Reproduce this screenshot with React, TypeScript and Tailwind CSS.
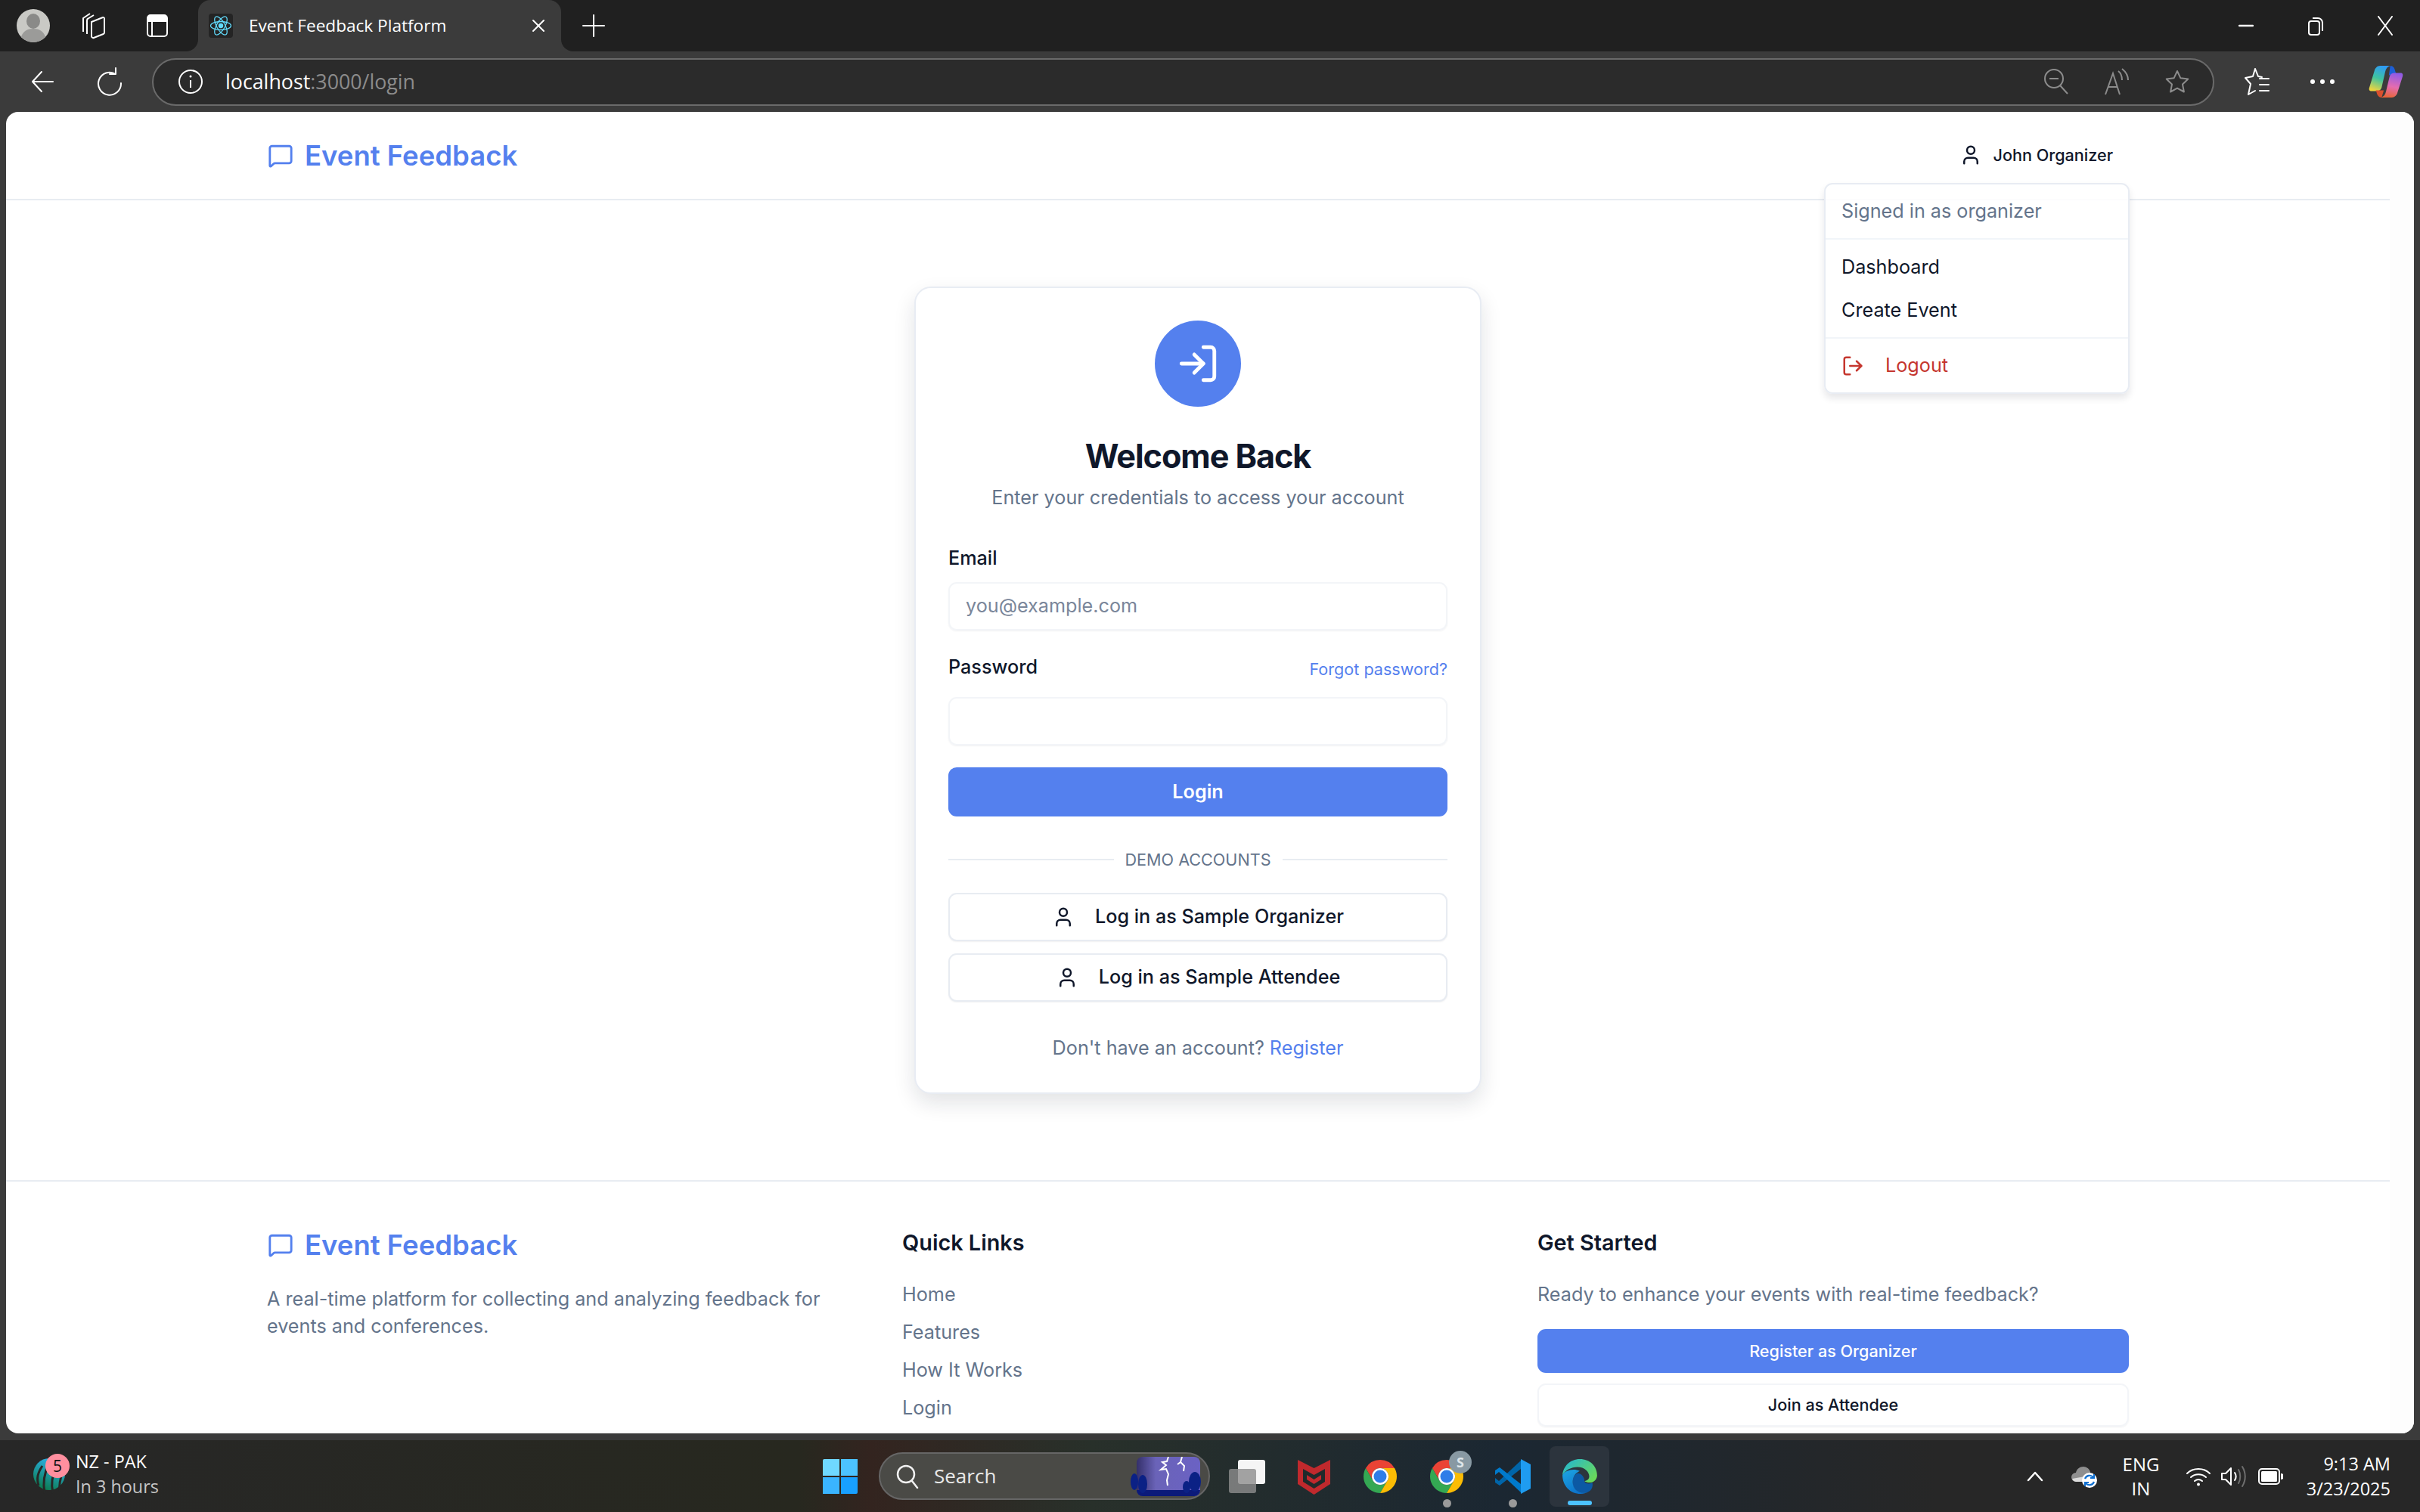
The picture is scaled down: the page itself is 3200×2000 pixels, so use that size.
import React from 'react'
import { LogIn, LogOut, MessageSquare, User } from 'lucide-react'

const Logo = () => (
  <div className="flex items-center gap-[15px] h-[48px] text-[#5480ee]">
    <MessageSquare size={34} strokeWidth={2} className="ml-[1px]" />
    <span className="text-[36.500px] font-semibold leading-[48px]">Event Feedback</span>
  </div>
)

const Avatar = () => (
  <svg width="44" height="44" viewBox="0 0 44 44">
    <circle cx="22" cy="22" r="22" fill="#c9c9c5" />
    <ellipse cx="22" cy="16" rx="9" ry="10" fill="#8a8a88" />
    <path d="M6 37c2-8 9-11 16-11s14 3 16 11a22 22 0 0 1-32 0z" fill="#9b9b99" />
  </svg>
)

const Collections = () => (
  <svg width="34" height="36" viewBox="0 0 34 36" fill="none" stroke="#fff" strokeWidth="2" strokeLinejoin="round">
    <path d="M3 26V8l9-6" />
    <path d="M8 29V11c0-1 .5-2 1.500-2.500L17 4" />
    <path d="M14 13l15-6c1-.4 2 .4 2 1.500V27c0 1-.5 1.600-1.400 2L17 34c-1 .4-3-.4-3-2z" />
  </svg>
)

const SidebarIcon = () => (
  <svg width="28" height="30" viewBox="0 0 28 30" fill="none">
    <rect x="1" y="1" width="26" height="28" rx="4" stroke="#fff" strokeWidth="2" />
    <path d="M1 10V5a4 4 0 0 1 4-4h18a4 4 0 0 1 4 4v5z" fill="#fff" />
    <path d="M7 10v19" stroke="#fff" strokeWidth="2" />
  </svg>
)

const ReactFavicon = () => (
  <div className="w-[32px] h-[32px] rounded-[4px] bg-[#242424] flex items-center justify-center">
    <svg width="30" height="30" viewBox="0 0 30 30" fill="none" stroke="#61dafb" strokeWidth="1.300">
      <ellipse cx="15" cy="15" rx="13.500" ry="5.500" />
      <ellipse cx="15" cy="15" rx="13.500" ry="5.500" transform="rotate(60 15 15)" />
      <ellipse cx="15" cy="15" rx="13.500" ry="5.500" transform="rotate(120 15 15)" />
      <circle cx="15" cy="15" r="2.600" fill="#61dafb" />
    </svg>
  </div>
)

const Thin = ({ d, w = 32, h = 32, color = '#fff', sw = 2 }: { d: string; w?: number; h?: number; color?: string; sw?: number }) => (
  <svg width={w} height={h} viewBox={`0 0 ${w} ${h}`} fill="none" stroke={color} strokeWidth={sw} strokeLinecap="round" strokeLinejoin="round">
    <path d={d} />
  </svg>
)

const Copilot = () => (
  <svg width="46" height="42" viewBox="0 0 48 44">
    <defs>
      <linearGradient id="cpA" x1="0.6" y1="0" x2="0.3" y2="1">
        <stop offset="0" stopColor="#2f9bf4" />
        <stop offset="0.5" stopColor="#3fc4a0" />
        <stop offset="1" stopColor="#efd43f" />
      </linearGradient>
      <linearGradient id="cpB" x1="0.6" y1="0" x2="0.4" y2="1">
        <stop offset="0" stopColor="#8f5be6" />
        <stop offset="0.55" stopColor="#e46cb0" />
        <stop offset="1" stopColor="#e8663a" />
      </linearGradient>
    </defs>
    <path d="M30 0c4 0 6 3 7 8l2 5H28z" fill="#1d5fd6" />
    <path d="M16 0h14c-4 1-6 4-7 8l-5 22c-1 3-3 5-7 5H4c-3 0-4-2-3-5L8 7c1-4 4-7 8-7z" fill="url(#cpA)" />
    <path d="M18 44c-4 0-6-3-7-7l-1-3h11z" fill="#d9502e" />
    <path d="M32 44H17c4-1 6-4 7-8l5-21c1-3 3-5 7-5h8c3 0 4 2 3 5l-7 22c-1 4-4 7-8 7z" fill="url(#cpB)" />
  </svg>
)

const WindowsLogo = () => (
  <div className="grid grid-cols-2 gap-[2px] w-[46px] h-[46px]">
    <div className="bg-[#6fd8ff] rounded-tl-[2px]" />
    <div className="bg-[#4cc3ff]" />
    <div className="bg-[#3ab4ff]" />
    <div className="bg-[#18a0ff] rounded-br-[2px]" />
  </div>
)

const StormThumb = () => (
  <svg width="98" height="52" viewBox="0 0 98 52" className="rounded-[10px]">
    <defs>
      <linearGradient id="sky" x1="0" y1="0" x2="1" y2="0">
        <stop offset="0" stopColor="#34306a" />
        <stop offset="0.3" stopColor="#6a63b8" />
        <stop offset="1" stopColor="#6b62c4" />
      </linearGradient>
    </defs>
    <rect x="8" width="84" height="52" rx="8" fill="url(#sky)" />
    <path d="M50 0l-2 6-6 1 5 4-7 6 7-1 3 7-2 8 1 7" fill="none" stroke="#fff" strokeWidth="2" />
    <path d="M68 0l-2 7 5 5-1 7M66 7l-4 3" fill="none" stroke="#fff" strokeWidth="2" />
    <path d="M8 44h84v0a8 8 0 0 1-8 8H16a8 8 0 0 1-8-8z" fill="#0b1a7a" />
    <ellipse cx="5" cy="33" rx="5" ry="11" fill="#0b2185" />
    <ellipse cx="16" cy="36" rx="6" ry="12" fill="#0b2185" />
    <ellipse cx="74" cy="40" rx="5" ry="8" fill="#0b2185" />
    <ellipse cx="85" cy="33" rx="8" ry="13" fill="#0b2185" />
  </svg>
)

const TaskView = () => (
  <div className="relative w-[48px] h-[44px]">
    <div className="absolute left-[12px] top-0 w-[36px] h-[32px] rounded-[3px] bg-[#f5f5f5]" />
    <div className="absolute left-0 top-[12px] w-[36px] h-[32px] rounded-[3px] bg-[#8d8d8d]/80" />
  </div>
)

const McAfee = () => (
  <svg width="43" height="48" viewBox="0 0 43 48">
    <path d="M0 2l21.500 11L43 2v32L21.500 48 0 34z" fill="#c0292d" />
    <path d="M7 14l14.500 8L36 14v17l-14.500 9L7 31z" fill="#1f2a2b" />
    <path d="M12 22l9.500 6 9.500-6v6l-9.500 6-9.500-6z" fill="#c0292d" />
  </svg>
)

const Chrome = () => (
  <svg width="48" height="48" viewBox="0 0 48 48">
    <path d="M24 2A22 22 0 0 1 43.050 13H24a11 11 0 0 0-9.530 16.500L4.950 13A22 22 0 0 1 24 2z" fill="#ea4335" />
    <path d="M4.950 13l9.520 16.500a11 11 0 0 0 19.060 0L24 46A22 22 0 0 1 4.950 13z" fill="#34a853" />
    <path d="M43.050 13H24a11 11 0 0 1 9.530 16.500L24 46a22 22 0 0 0 19.050-33z" fill="#fbbc04" />
    <circle cx="24" cy="24" r="11" fill="#fff" />
    <circle cx="24" cy="24" r="8.500" fill="#2f7de8" />
  </svg>
)

const VSCode = () => (
  <svg width="49" height="48" viewBox="0 0 49 48">
    <path d="M35 3L6 30l-5-4v6l6 4 28-22z" fill="#0065a9" />
    <path d="M35 45L6 18l-5 4v-6l6-4 28 22z" fill="#007acc" />
    <path d="M35 1l13 7v32l-13 7z" fill="#1f9cf0" />
  </svg>
)

const Edge = () => (
  <svg width="50" height="52" viewBox="0 0 48 48">
    <defs>
      <linearGradient id="edA" x1="0" y1="0" x2="1" y2="0.7">
        <stop offset="0" stopColor="#1fb4d8" />
        <stop offset="1" stopColor="#6ad95a" />
      </linearGradient>
      <linearGradient id="edB" x1="0" y1="0" x2="0.6" y2="1">
        <stop offset="0" stopColor="#1da7e4" />
        <stop offset="1" stopColor="#0c71c9" />
      </linearGradient>
    </defs>
    <path d="M34 44c-8 3-20 1-19-13 0-5 2-9 6-11 6 0 9 6 9 10 0 3 6 4 10 2 1 5-1 10-6 12z" fill="#0c59a4" />
    <path d="M2 22c0 14 10 24 23 24 4 0 7-1 9-2-9 3-19-2-19-13 0-7 4-12 9-14C15 13 5 17 2 22z" fill="url(#edB)" />
    <path d="M24 2C12 2 3 11 2 22c4-6 11-10 19-10 9 0 15 6 15 12 0 3-2 5-6 6 4 3 15 3 16-7C46 11 37 2 24 2z" fill="url(#edA)" />
  </svg>
)

const IccLogo = () => (
  <svg width="46" height="48" viewBox="0 0 46 48">
    <defs>
      <linearGradient id="icc" x1="0.7" y1="0" x2="0.3" y2="1">
        <stop offset="0" stopColor="#2db4f0" />
        <stop offset="1" stopColor="#0b7a4c" />
      </linearGradient>
    </defs>
    <circle cx="23" cy="21" r="21" fill="url(#icc)" />
    <path d="M14 10c-6 9-8 16-5 26M23 6c-6 12-9 24-6 40M33 10c-6 12-8 24-5 36M41 18c-4 10-5 18-4 26" fill="none" stroke="#272827" strokeWidth="3" />
  </svg>
)

const Wifi = () => (
  <svg width="34" height="28" viewBox="0 0 34 28" fill="none" stroke="#fff" strokeWidth="2" strokeLinecap="round">
    <path d="M2 10c8-8 22-8 30 0" />
    <path d="M7 15c5.500-5 14.500-5 20 0" />
    <path d="M12 20c3-2.500 7-2.500 10 0" />
    <circle cx="17" cy="24.500" r="2" fill="#fff" stroke="none" />
  </svg>
)

const Speaker = () => (
  <svg width="34" height="30" viewBox="0 0 34 30" fill="none" strokeWidth="2" strokeLinejoin="round" strokeLinecap="round">
    <path d="M2 11v8h5l7 7V4L7 11z" stroke="#fff" />
    <path d="M19 10c2 3 2 7 0 10" stroke="#fff" />
    <path d="M24 6c3 5 3 13 0 18" stroke="#6e6e6e" />
    <path d="M29 2c5 8 5 18 0 26" stroke="#6e6e6e" />
  </svg>
)

const Battery = () => (
  <svg width="33" height="22" viewBox="0 0 33 22" fill="none">
    <rect x="1" y="1" width="27" height="20" rx="4" stroke="#fff" strokeWidth="2" />
    <rect x="4" y="4" width="21" height="14" rx="1.500" fill="#fff" />
    <path d="M30 7a4 4 0 0 1 0 8z" fill="#fff" />
  </svg>
)

const CloudSync = () => (
  <svg width="34" height="30" viewBox="0 0 34 30">
    <path d="M6 22a6 6 0 0 1 0-12c1-5 5-8 10-8 4 0 8 3 9 7l1 13z" fill="#8f8f8f" />
    <path d="M1 18a6 6 0 0 0 5 4h12v-7z" fill="#dcdcdc" />
    <circle cx="24" cy="20" r="10" fill="#fff" />
    <path d="M18 18a6.500 6.500 0 0 1 11-2M30 22a6.500 6.500 0 0 1-11 2" fill="none" stroke="#0f6fd0" strokeWidth="2.200" />
    <path d="M30 12v5h-5M18 28v-5h5" fill="none" stroke="#0f6fd0" strokeWidth="2" />
  </svg>
)

const DemoButton = ({ label }: { label: string }) => (
  <button className="w-full flex items-center justify-center gap-[27px] border-2 border-[#e8ecf2] rounded-[11px] bg-white text-[#0f172a] text-[25.2px] font-[450] shadow-[0_1px_2px_rgba(15,23,42,0.06)] h-[64px]">
    <User size={30} strokeWidth={2} />
    {label}
  </button>
)

const BrowserTabs = () => (
  <div className="h-[68px] bg-[#202020] flex items-center shrink-0">
    <div className="ml-[22px]"><Avatar /></div>
    <div className="ml-[41px]"><Collections /></div>
    <div className="ml-[53px]"><SidebarIcon /></div>
    <div className="relative ml-[40px] w-[480px] h-[68px] bg-[#3b3b3b] rounded-t-[16px] flex items-center pl-[14px]">
      <span className="absolute bottom-0 -left-[16px] w-[16px] h-[16px] bg-[#3b3b3b]">
        <span className="block w-full h-full bg-[#202020] rounded-br-[16px]" />
      </span>
      <span className="absolute bottom-0 -right-[16px] w-[16px] h-[16px] bg-[#3b3b3b]">
        <span className="block w-full h-full bg-[#202020] rounded-bl-[16px]" />
      </span>
      <ReactFavicon />
      <span className="ml-[21px] text-[22.6px] text-white">Event Feedback Platform</span>
      <div className="ml-auto mr-[21px]"><Thin w={18} h={18} d="M2 2l14 14M16 2L2 16" /></div>
    </div>
    <div className="ml-[27px]"><Thin d="M16 2v28M2 16h28" /></div>
    <div className="ml-auto flex items-center gap-[72px] mr-[36px]">
      <Thin w={20} h={4} d="M1 2h18" sw={2.500} />
      <svg width="20" height="26" viewBox="0 0 20 26" fill="none" stroke="#fff" strokeWidth="2">
        <rect x="1" y="7" width="14" height="18" rx="3" />
        <path d="M6 3h7a6 6 0 0 1 6 6v11" />
      </svg>
      <Thin w={20} h={26} d="M1 1l18 24M19 1L1 25" />
    </div>
  </div>
)

const BrowserToolbar = () => (
  <div className="h-[80px] bg-[#3b3b3b] flex items-center shrink-0">
    <div className="ml-[40px]"><Thin d="M30 16H3M15 3L3 16l12 13" /></div>
    <div className="ml-[56px]">
      <Thin w={34} h={38} d="M25 9a15 15 0 1 0 7 12M25 1v8h-8" />
    </div>
    <div className="ml-[39px] w-[2727px] h-[63px] rounded-full bg-[#2b2b2b] border-2 border-[#6a6a6a] flex items-center pl-[33px] pr-[31px]">
      <svg width="32" height="32" viewBox="0 0 32 32" fill="none" stroke="#fff" strokeWidth="2">
        <circle cx="16" cy="16" r="15" />
        <path d="M16 14v10" />
        <circle cx="16" cy="9" r="1.500" fill="#fff" stroke="none" />
      </svg>
      <span className="ml-[30px] text-[26.8px] text-white">localhost<span className="text-[#8c8c8c]">:3000/login</span></span>
      <div className="ml-auto flex items-center gap-[48px]">
        <svg width="32" height="34" viewBox="0 0 32 34" fill="none" stroke="#8c8c8c" strokeWidth="2">
          <circle cx="13" cy="13" r="12" />
          <path d="M7 13h12M21 22l10 11" />
        </svg>
        <svg width="32" height="36" viewBox="0 0 32 36" fill="none" stroke="#8c8c8c" strokeWidth="2">
          <path d="M1 35L11 7l9 28M5 25h12" />
          <path d="M18 4c4 3 5 7 5 12M23 1c5 4 8 9 8 15" />
        </svg>
        <Thin w={32} h={32} color="#8c8c8c" d="M16 2l4.300 9.200 10 1.300-7.300 7 1.900 10L16 24.600 7.100 29.500l1.900-10-7.300-7 10-1.300z" />
      </div>
    </div>
    <div className="ml-[39px]">
      <Thin w={34} h={40} d="M15 3l4 10 5 1M12 13l3-10M12 13L2 15l7 8-3 14 9-5M21 16h12M21 24h12M21 32h12" />
    </div>
    <div className="ml-[54px] flex gap-[7px]">
      <span className="w-[6px] h-[6px] rounded-full bg-white" />
      <span className="w-[6px] h-[6px] rounded-full bg-white" />
      <span className="w-[6px] h-[6px] rounded-full bg-white" />
    </div>
    <div className="ml-[45px]"><Copilot /></div>
  </div>
)

const UserMenu = () => (
  <div className="absolute -right-[1px] top-[94px] w-[404px] h-[279px] rounded-[11px] border-2 border-[#e8ecf3] bg-white/85 shadow-[0_6px_10px_rgba(15,23,42,0.1)] text-[25.2px] flex flex-col">
    <div className="h-[73px] border-b-2 border-[#f1f5f9] pl-[21px] pt-[18px] leading-[34px] text-[#64748b]">Signed in as organizer</div>
    <div className="h-[131px] border-b-2 border-[#f1f5f9] pl-[21px] pt-[19px] text-[#0f172a] flex flex-col gap-[23px]">
      <div className="leading-[34px]">Dashboard</div>
      <div className="leading-[34px]">Create Event</div>
    </div>
    <div className="flex-1 flex items-center pl-[21px] gap-[28px] text-[#c5362e]">
      <LogOut size={30} strokeWidth={2} />
      <span>Logout</span>
    </div>
  </div>
)

const Header = () => (
  <header className="h-[117px] border-b-2 border-[#e8ecf2] px-[345px] shrink-0">
    <div className="relative h-full flex items-center justify-between">
      <Logo />
      <div className="flex items-center gap-[14px] pr-[21px] text-[21.6px] font-[450] text-[#0f172a]">
        <User size={30} strokeWidth={2} />
        John Organizer
      </div>
      <UserMenu />
    </div>
  </header>
)

const LoginCard = () => (
  <div className="w-[750px] border-2 border-[#e8ecf3] rounded-[22px] bg-white shadow-[0_12px_28px_rgba(15,23,42,0.12)] px-[43px] pt-[43px] pb-[41px] flex flex-col">
    <div className="self-center w-[114px] h-[114px] rounded-full bg-[#5480ee] flex items-center justify-center text-white">
      <LogIn size={58} strokeWidth={2} />
    </div>
    <h1 className="mt-[41px] text-center text-[43.2px] font-bold tracking-tight leading-[48px] text-[#0f172a]">Welcome Back</h1>
    <p className="mt-[13px] text-center text-[25.2px] leading-[36px] text-[#64748b]">Enter your credentials to access your account</p>
    <label className="mt-[46px] text-[25.2px] font-[450] leading-[32px] text-[#0f172a]">Email</label>
    <div className="mt-[16px] h-[64px] rounded-[11px] border-2 border-[#f3f5f8] shadow-[0_1px_2px_rgba(15,23,42,0.06)] flex items-center pl-[21px] text-[25.2px] text-[#7a869a]">you@example.com</div>
    <div className="mt-[32px] h-[32px] flex justify-between">
      <label className="text-[25.2px] font-[450] leading-[32px] text-[#0f172a]">Password</label>
      <a className="text-[21.6px] leading-[38px] text-[#5480ee]">Forgot password?</a>
    </div>
    <div className="mt-[24px] h-[64px] rounded-[11px] border-2 border-[#f3f5f8] shadow-[0_1px_2px_rgba(15,23,42,0.06)]" />
    <button className="mt-[29px] h-[65px] rounded-[11px] bg-[#5480ee] text-white text-[25.2px] font-semibold">Login</button>
    <div className="mt-[42px] h-[30px] flex items-center gap-[15px]">
      <div className="flex-1 h-[2px] bg-[#e8ecf2]" />
      <span className="text-[21.6px] text-[#64748b]">DEMO ACCOUNTS</span>
      <div className="flex-1 h-[2px] bg-[#e8ecf2]" />
    </div>
    <div className="mt-[29px] flex flex-col gap-[16px]">
      <DemoButton label="Log in as Sample Organizer" />
      <DemoButton label="Log in as Sample Attendee" />
    </div>
    <p className="mt-[43px] text-center text-[25.2px] leading-[36px] text-[#64748b]">
      Don't have an account? <a className="text-[#5480ee]">Register</a>
    </p>
  </div>
)

const Footer = () => (
  <footer className="border-t-2 border-[#e8ecf2] px-[345px] pt-[60px] grid grid-cols-3 gap-[58px] shrink-0">
    <div>
      <Logo />
      <p className="mt-[29px] text-[25.2px] leading-[36px] text-[#64748b]">A real-time platform for collecting and analyzing feedback for events and conferences.</p>
    </div>
    <div>
      <h3 className="mt-[2px] text-[28.8px] font-semibold leading-[38px] text-[#0f172a]">Quick Links</h3>
      <ul className="mt-[32px] flex flex-col gap-[16px] text-[25.2px] leading-[34px] text-[#64748b]">
        <li>Home</li>
        <li>Features</li>
        <li>How It Works</li>
        <li>Login</li>
      </ul>
    </div>
    <div>
      <h3 className="mt-[2px] text-[28.8px] font-semibold leading-[38px] text-[#0f172a]">Get Started</h3>
      <p className="mt-[32px] text-[25.2px] leading-[34px] text-[#64748b]">Ready to enhance your events with real-time feedback?</p>
      <button className="mt-[29px] w-full h-[58px] rounded-[11px] bg-[#5480ee] text-white text-[21.6px] font-medium">Register as Organizer</button>
      <button className="mt-[14px] w-full h-[57px] rounded-[11px] border-2 border-[#f3f5f8] text-[#0f172a] text-[21.6px] font-medium shadow-[0_1px_2px_rgba(15,23,42,0.06)]">Join as Attendee</button>
    </div>
  </footer>
)

const Taskbar = () => (
  <div className="relative h-[95px] shrink-0 flex items-center text-white font-['Open_Sans',sans-serif] bg-[linear-gradient(90deg,#272727_0%,#27281f_33%,#33241f_36%,#28302a_45%,#1b2732_62%,#272727_80%)]">
    <div className="w-[1088px] pl-[42px] flex items-center shrink-0">
      <div className="relative w-[46px]">
        <IccLogo />
        <span className="absolute -right-[4px] -top-[6px] w-[32px] h-[32px] rounded-full bg-[#ff8f9f] text-[#111] text-[21px] leading-[32px] text-center">5</span>
      </div>
      <div className="ml-[12px] pb-[5px] text-[23.4px] leading-[33px] whitespace-nowrap">
        <div>NZ - PAK</div>
        <div className="text-[#c6c6c6]">In 3 hours</div>
      </div>
    </div>
    <WindowsLogo />
    <div className="ml-[28px] w-[438px] h-[63px] rounded-full bg-[#4a4a46] border-2 border-[#666] flex items-center pl-[21px] pr-[5px]">
      <Thin w={30} h={32} color="#f0f0f0" sw={2.500} d="M13 2a11 11 0 1 1 0 22a11 11 0 1 1 0-22zM21 22l7 9" />
      <span className="ml-[20px] text-[26px] text-[#e8e8e8]">Search</span>
      <div className="ml-auto"><StormThumb /></div>
    </div>
    <div className="ml-[25px]"><TaskView /></div>
    <div className="ml-[43px]"><McAfee /></div>
    <div className="ml-[42px]"><Chrome /></div>
    <div className="relative ml-[40px]">
      <Chrome />
      <span className="absolute -right-[9px] -top-[10px] w-[30px] h-[30px] rounded-full bg-[#8899a3] text-[#dfe6ea] text-[18px] font-bold leading-[30px] text-center">S</span>
      <span className="absolute left-[19px] top-[54px] w-[11px] h-[11px] rounded-full bg-[#9a9a9a]" />
    </div>
    <div className="relative ml-[39px]">
      <VSCode />
      <span className="absolute left-[19px] top-[54px] w-[11px] h-[11px] rounded-full bg-[#9a9a9a]" />
    </div>
    <div className="relative ml-[24px] w-[79px] h-[80px] rounded-[8px] bg-[#2c343d] flex items-start justify-center pt-[14px]">
      <Edge />
      <span className="absolute left-[24px] bottom-[2px] w-[32px] h-[6px] rounded-full bg-[#4cc2ff]" />
    </div>
    <div className="ml-[552px]"><Thin w={22} h={14} d="M2 12L11 2l9 10" sw={2.500} /></div>
    <div className="ml-[37px]"><CloudSync /></div>
    <div className="ml-[30px] w-[56px] text-center text-[24px] leading-[32px]">
      <div>ENG</div>
      <div>IN</div>
    </div>
    <div className="ml-[31px]"><Wifi /></div>
    <div className="ml-[12px]"><Speaker /></div>
    <div className="ml-[16px]"><Battery /></div>
    <div className="ml-auto mr-[39px] text-right text-[23.5px] leading-[33px]">
      <div>9:13 AM</div>
      <div>3/23/2025</div>
    </div>
  </div>
)

export default function App() {
  return (
    <div className="w-[3200px] h-[2000px] flex flex-col overflow-hidden bg-[#3b3b3b] font-['Open_Sans',sans-serif]">
      <BrowserTabs />
      <BrowserToolbar />
      <div className="flex-1 min-h-0 mx-[8px] mb-[9px] rounded-[16px] bg-white overflow-hidden flex font-[Inter,sans-serif]">
        <div className="w-[3152px] flex flex-col">
          <Header />
          <main className="flex justify-center pt-[114px] pb-[114px] shrink-0">
            <LoginCard />
          </main>
          <Footer />
        </div>
        <div className="flex-1 bg-[#fdfdfd]" />
      </div>
      <Taskbar />
    </div>
  )
}
